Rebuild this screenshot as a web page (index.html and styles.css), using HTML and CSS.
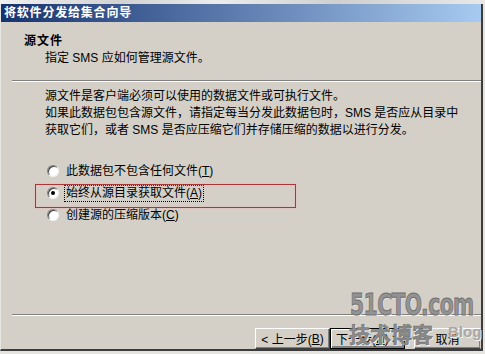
FILE: index.html
```html
<!DOCTYPE html>
<html lang="zh-CN">
<head>
<meta charset="utf-8">
<title>将软件分发给集合向导</title>
<link rel="stylesheet" href="styles.css">
</head>
<body>
<div class="screen">
  <div class="strip"></div>
  <div class="window">
    <div class="titlebar">将软件分发给集合向导</div>
    <div class="header">
      <div class="h-title">源文件</div>
      <div class="h-sub">指定 SMS 应如何管理源文件。</div>
    </div>
    <div class="sep"></div>
    <div class="body">
      <p>源文件是客户端必须可以使用的数据文件或可执行文件。</p>
      <p class="p2">如果此数据包包含源文件，请指定每当分发此数据包时，SMS 是否应从目录中<br>获取它们，或者 SMS 是否应压缩它们并存储压缩的数据以进行分发。</p>
      <div class="options">
        <div class="opt"><span class="radio"></span><span class="label">此数据包不包含任何文件(<u>T</u>)</span></div>
        <div class="opt"><span class="radio on"></span><span class="label focus">始终从源目录获取文件(<u>A</u>)</span></div>
        <div class="opt"><span class="radio"></span><span class="label">创建源的压缩版本(<u>C</u>)</span></div>
      </div>
    </div>
    <div class="sep sep-bottom"></div>
    <div class="footer">
      <div class="btn">&lt; 上一步(<u>B</u>)</div>
      <div class="btn default">下一步(<u>N</u>) &gt;</div>
      <div class="btn cancel">取消</div>
    </div>
  </div>
  <div class="highlight"></div>
  <div class="wm-logo">51CTO.com</div>
  <div class="wm-blog">技术博客</div>
  <div class="wm-en">Blog</div>
</div>
</body>
</html>
```
FILE: styles.css
```css
* { box-sizing: border-box; }
html, body { margin: 0; padding: 0; }
body {
  width: 485px;
  height: 354px;
  overflow: hidden;
  background: #e6e4e0;
  font-family: "Liberation Sans", "Noto Sans CJK SC", sans-serif;
  font-size: 12px;
  color: #000;
}
.screen { position: relative; width: 485px; height: 354px; }
.strip {
  height: 4px;
  background: linear-gradient(90deg, #f0f0f0, #d2d2d2 25%, #ececec 45%, #cfcfcf 70%, #e8e8e8);
}
.window {
  width: 483px;
  height: 347px;
  background: #d4d0c8;
  border-left: 1px solid #e8e6e2;
  border-right: 2px solid #3c3c3c;
  border-bottom: 2px solid #3c3c3c;
  display: flex;
  flex-direction: column;
  overflow: hidden;
}
.titlebar {
  height: 18px;
  background: linear-gradient(90deg, #17336f, #a6caf0);
  color: #fff;
  font-weight: bold;
  font-size: 12px;
  line-height: 18px;
  padding-left: 3px;
  letter-spacing: 0.8px;
}
.header {
  height: 58px;
  padding: 11px 0 0 23px;
  line-height: 17px;
}
.h-title { font-weight: bold; letter-spacing: 1px; }
.h-sub { padding-left: 21px; }
.sep {
  height: 2px;
  border-top: 1px solid #808080;
  border-bottom: 1px solid #ffffff;
  margin-left: 11px;
}
.body {
  flex: 1;
  padding: 6px 0 0 44px;
  line-height: 17px;
}
.body p { margin: 0; white-space: nowrap; }
.p2 { margin-top: 4px; }
.options { margin-top: 21px; }
.opt { height: 22px; display: flex; align-items: center; }
.radio {
  width: 12px;
  height: 12px;
  border-radius: 50%;
  background: #fff;
  border: 1px solid;
  border-color: #808080 #f4f4f4 #f4f4f4 #808080;
  box-shadow: inset 1px 1px 0 #404040;
  margin-left: 2px;
  margin-right: 6px;
  display: flex;
  align-items: center;
  justify-content: center;
}
.radio.on::after {
  content: "";
  width: 4px;
  height: 4px;
  border-radius: 50%;
  background: #000;
}
.label { line-height: 15px; padding: 0 1px; }
.label.focus { outline: 1px dotted #000; }
.footer {
  height: 33px;
  padding: 12px 0 0 0;
  display: flex;
  justify-content: flex-end;
  align-items: flex-start;
}
.btn {
  height: 21px;
  width: 75px;
  background: #d4d0c8;
  border: 1px solid;
  border-color: #ffffff #404040 #404040 #ffffff;
  box-shadow: inset -1px -1px 0 #808080;
  display: flex;
  align-items: center;
  justify-content: center;
  font-size: 12px;
}
.btn.default { border: 1px solid #000; box-shadow: inset 1px 1px 0 #fff, inset -2px -2px 0 #808080; }
.btn.cancel { margin-left: 9px; width: 67px; border-right-color: #d4d0c8; }
.highlight {
  position: absolute;
  left: 35px;
  top: 184px;
  width: 261px;
  height: 24px;
  border: 1.5px solid #a83838;
  box-shadow: 0 0 2px #f2b4b4, inset 0 0 2px #f2b4b4;
}
.wm-logo {
  position: absolute;
  left: 350px;
  top: 289px;
  font-family: "DejaVu Sans", sans-serif;
  font-weight: bold;
  font-size: 31px;
  line-height: 31px;
  letter-spacing: -1px;
  color: #939393;
  -webkit-text-stroke: 1px #6e6e6e;
  text-shadow: 1px 1px 0 #f4f4f4;
  transform: scaleX(0.66);
  transform-origin: left top;
  white-space: nowrap;
}
.wm-blog {
  position: absolute;
  left: 349px;
  top: 319px;
  font-family: "Noto Sans CJK SC", sans-serif;
  font-weight: bold;
  font-size: 21px;
  line-height: 28px;
  color: #8a8a8a;
  -webkit-text-stroke: 0.5px #6e6e6e;
  text-shadow: 1px 1px 0 #f6f6f6;
}
.wm-en {
  position: absolute;
  left: 448px;
  top: 324px;
  font-family: "Liberation Sans", sans-serif;
  font-weight: bold;
  font-size: 15px;
  line-height: 16px;
  color: #a8a8a8;
  text-shadow: 1px 1px 0 #f0f0f0;
}
```
